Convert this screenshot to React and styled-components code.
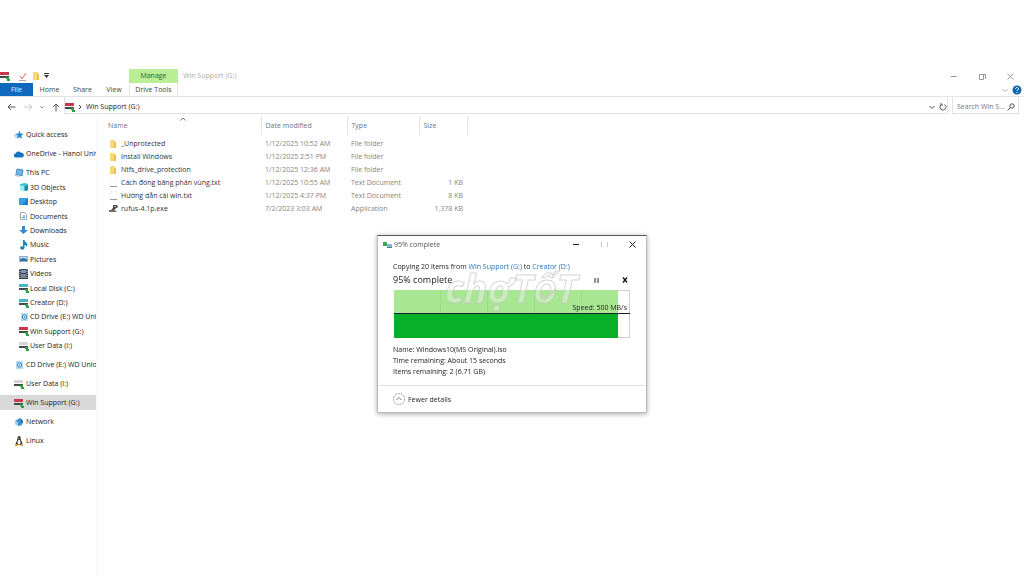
import { useState } from "react";
import styled, { createGlobalStyle } from 'styled-components'

const GlobalStyle = createGlobalStyle`
    * {
        box-sizing: border-box;
    }

    body {
        margin: 0;
        background-color: #fff;
        color: #222;
        font-family: "Open Sans", "Noto Sans", sans-serif;
        font-size: 7px;
        line-height: 11px;
    }

    button, input {
        font: inherit;
        color: inherit;
        border: none;
        background: none;
        padding: 0;
        margin: 0;
    }

    a {
        color: inherit;
        text-decoration: none;
    }
`;

//Style
const StyledWindow = styled.div`
    min-height: 100vh;
    padding-top: 69px;
    display: flex;
    flex-direction: column;
`;

const StyledTitleBar = styled.header`
    display: flex;
    align-items: stretch;
    height: 14px;
`;

const StyledQuickBar = styled.div`
    display: flex;
    align-items: center;
    width: 129px;
    gap: 3px;
`;

const StyledManage = styled.div`
    width: 49px;
    background-color: #b9ee94;
    color: #3c5a30;
    text-align: center;
    line-height: 14px;
`;

const StyledWindowTitle = styled.div`
    flex: 1;
    padding-left: 5px;
    color: #aaa;
    line-height: 14px;
`;

const StyledCaptionButton = styled.button`
    width: 28px;
    color: ${(props) => props.$color || '#999'};
    display: flex;
    align-items: center;
    justify-content: center;
`;

const StyledRibbon = styled.nav`
    display: flex;
    align-items: stretch;
    height: 14px;
    border-bottom: 1px solid #e4e4e4;
`;

const StyledTab = styled.button`
    width: ${(props) => props.$width}px;
    background-color: ${(props) => (props.$file ? '#0e69bc' : 'transparent')};
    color: ${(props) => (props.$file ? '#e4f0fa' : '#444')};
    border-left: 1px solid ${(props) => (props.$context ? '#e4e4e4' : 'transparent')};
    border-right: 1px solid ${(props) => (props.$context ? '#e4e4e4' : 'transparent')};
    text-align: center;
`;

const StyledRibbonEnd = styled.div`
    margin-left: auto;
    padding-right: 2px;
    display: flex;
    align-items: center;
    gap: 4px;
`;

const StyledAddressRow = styled.div`
    display: flex;
    align-items: stretch;
    height: 17px;
    gap: 4px;
    padding-right: 5px;
`;

const StyledNavButtons = styled.div`
    display: flex;
    align-items: center;
    justify-content: space-between;
    width: 60px;
    padding: 3px 0 0 7px;
`;

const StyledIconButton = styled.button`
    display: flex;
    align-items: center;
    justify-content: center;
    color: ${(props) => props.$color || '#555'};
`;

const StyledAddress = styled.div`
    flex: 1;
    display: flex;
    align-items: center;
    gap: 4px;
    padding-top: 3px;
    border: 1px solid #e2e2e2;
    border-top: none;
`;

const StyledPath = styled.a`
    flex: 1;
`;

const StyledSearch = styled.label`
    width: 67px;
    display: flex;
    align-items: center;
    padding: 3px 3px 0 4px;
    border: 1px solid #e2e2e2;
    border-top: none;
    color: #555;
`;

const StyledSearchInput = styled.input`
    flex: 1;
    min-width: 0;
    outline: none;

    &::placeholder {
        color: #777;
        opacity: 1;
    }
`;

const StyledBody = styled.div`
    flex: 1;
    display: flex;
    align-items: stretch;
`;

const StyledSidebar = styled.nav`
    width: 98px;
    flex: none;
    padding: 13px 1px 0 0;
    border-right: 1px solid #f3f3f3;
    display: flex;
    flex-direction: column;
    gap: 4px;
`;

const StyledItem = styled.a`
    display: flex;
    align-items: center;
    gap: ${(props) => (props.$child ? 1 : 2)}px;
    height: ${(props) => (props.$child ? 'auto' : '15px')};
    padding-left: ${(props) => (props.$child ? 19 : 14)}px;
    background-color: ${(props) => (props.$active ? '#d9d9d9' : 'transparent')};
    white-space: nowrap;
    overflow: hidden;

    svg {
        flex: none;
    }
`;

const StyledChildren = styled.div`
    display: grid;
    grid-auto-rows: 1fr;
    height: 173px;
`;

const StyledMain = styled.main`
    flex: 1;
    min-width: 0;
    padding-top: 2px;
`;

const StyledTable = styled.table`
    table-layout: fixed;
    width: 369px;
    border-collapse: collapse;
    color: #858585;
`;

const StyledHeadCell = styled.th`
    width: ${(props) => props.$width}px;
    height: 19px;
    padding: 0 0 0 ${(props) => props.$indent || 4}px;
    border-right: 1px solid #e5e5e5;
    color: #65758b;
    font-weight: normal;
    text-align: left;
    position: relative;
`;

const StyledSort = styled.span`
    position: absolute;
    top: 0;
    left: 82px;
    display: flex;
`;

const StyledGap = styled.td`
    height: 2px;
    padding: 0;
`;

const StyledCell = styled.td`
    height: 13px;
    padding: 0 4px;
    text-align: ${(props) => (props.$right ? 'right' : 'left')};
    white-space: nowrap;
`;

const StyledFileName = styled.a`
    display: flex;
    align-items: center;
    gap: 3px;
    padding-left: 7px;
    color: #333;
`;

const StyledDialog = styled.section`
    position: fixed;
    top: 235px;
    left: 377px;
    width: 270px;
    background-color: #fff;
    border: 1px solid #bbb;
    border-top-color: #555;
    box-shadow: 0 1px 5px rgba(0, 0, 0, 0.35);
`;

const StyledDialogTitle = styled.header`
    display: flex;
    align-items: center;
    height: 17px;
    padding-left: 5px;
    color: #555;
`;

const StyledDialogName = styled.h1`
    flex: 1;
    margin: 0;
    padding-left: 1px;
    font-size: 7px;
    font-weight: normal;
`;

const StyledDialogBody = styled.div`
    padding: 8px 16px 8px 15px;
`;

const StyledLink = styled.a`
    color: #2a73b8;
`;

const StyledStatus = styled.div`
    display: flex;
    align-items: center;
    height: 18px;
    padding: 0 1px 4px 0;
    font-size: 9px;
    color: #222;
`;

const StyledPercent = styled.div`
    flex: 1;
`;

const StyledActions = styled.div`
    display: flex;
    align-items: center;
    gap: 23px;
    padding-top: 2px;
`;

const StyledChart = styled.div`
    position: relative;
    height: 48px;
    margin: 0 0 6px 1px;
    background-color: #fff;
    box-shadow: inset 0 0 0 1px #d0d0d0;
`;

const StyledProgress = styled.div`
    height: 100%;
    display: flex;
    flex-direction: column;
    background-color: #a8e791;
    background-image: repeating-linear-gradient(to right, transparent 0 46px, #9bdc85 46px 47px);
`;

const StyledSolid = styled.div`
    height: 50%;
    margin-top: auto;
    background-color: #08b028;
`;

const StyledSpeed = styled.div`
    position: absolute;
    left: 0;
    right: 0;
    bottom: 24px;
    padding-right: 3px;
    border-bottom: 1px solid #123;
    text-align: right;
`;

const StyledFooter = styled.footer`
    height: 27px;
    padding-left: 15px;
    border-top: 1px solid #e2e2e2;
    display: flex;
    align-items: center;
`;

const StyledFewer = styled.button`
    display: flex;
    align-items: center;
    gap: 3px;
`;

const StyledWatermark = styled.div`
    position: absolute;
    top: 38px;
    left: 67px;
    display: flex;
    align-items: baseline;
    font-size: 39px;
    font-style: italic;
    font-weight: bold;
    line-height: 28px;
    color: rgba(255, 255, 255, 0.35);
    -webkit-text-stroke: 1px rgba(195, 195, 195, 0.7);
    pointer-events: none;
`;

const StyledSmallCap = styled.span`
    position: relative;
    font-size: 32px;
`;

const StyledCheck = styled.svg`
    position: absolute;
    left: 4px;
    top: 8px;
`;

function Drive({ color }){
    return(
        <svg width="10" height="10" viewBox="0 0 10 10" aria-hidden="true">
            <rect x="0" y="1" width="9" height="3" fill={color} />
            <rect x="0" y="5" width="9" height="2" fill="#3f4f46" />
            <path d="M6 6h3v2h1v2H7V8H6z" fill="#2f9e44" />
        </svg>
    )
}

function SideIcon({ name }){
    switch (name){
        case "red": return <Drive color="#c9374a" />
        case "teal": return <Drive color="#48b6c4" />
        case "grey": return <Drive color="#d5d5d5" />
        case "star": return <svg width="10" height="10" viewBox="0 0 10 10"><path d="M5.5.8l1.1 2.7 3 .2-2.3 2 .8 3-2.6-1.5L3 8.8l.7-3-2.3-2 3-.3z" fill="#2688cf" /><path d="M0 5h3M1 7h2" stroke="#7bbce8" /></svg>
        case "cloud": return <svg width="10" height="10" viewBox="0 0 10 10"><path d="M2 8.500a2 2 0 0 1-.3-4A3 3 0 0 1 7 3.800a2.400 2.400 0 0 1 1 4.700z" fill="#1673c0" /></svg>
        case "pc": return <svg width="10" height="10" viewBox="0 0 10 10"><path d="M3 1l6 1-1 6-6-2z" fill="#72b5e8" stroke="#4b89bd" /><path d="M1 6l5 2-1 1-4-1z" fill="#b4c6d6" /></svg>
        case "cube": return <svg width="10" height="10" viewBox="0 0 10 10"><path d="M1 2l5-1 3 1v6L6 9 1 8z" fill="#3cc4d8" /><path d="M1 3l4 1v5L1 8z" fill="#a5e8ef" /><path d="M6 4l3-1v5L6 9z" fill="#178ca8" /></svg>
        case "desktop": return <svg width="10" height="10" viewBox="0 0 10 10"><rect y="1" width="9" height="7" fill="#1681ce" /><path d="M0 1h9L3 8H0z" fill="#36a2e6" /></svg>
        case "doc": return <svg width="10" height="10" viewBox="0 0 10 10"><path d="M1.500 1.500h4l2 2v5h-6z" fill="#fff" stroke="#98a6b4" /><path d="M5 4v3M3 6.500h3" stroke="#6b96bf" /></svg>
        case "down": return <svg width="10" height="10" viewBox="0 0 10 10"><path d="M3 1h3v4h3L4.500 9 0 5h3z" fill="#3886cf" /></svg>
        case "music": return <svg width="10" height="10" viewBox="0 0 10 10"><path d="M4 0h1.500c0 2 3 2.500 3 5L7 7c0-1.500-.5-2-1.500-2v3a2.200 1.700 0 1 1-1.500-1.700z" fill="#1987bd" /></svg>
        case "picture": return <svg width="10" height="10" viewBox="0 0 10 10"><rect x=".5" y="2.500" width="8" height="5" fill="#b9dcf3" stroke="#9bb0c0" /><path d="M1 7V5l3-1 4 1v2z" fill="#2f74a8" /></svg>
        case "video": return <svg width="10" height="10" viewBox="0 0 10 10"><rect x="0" y="0" width="9" height="10" fill="#34424e" /><path d="M1 0v10M8 0v10" stroke="#c8d0d6" strokeDasharray="1 1" /><rect x="2" y="1" width="5" height="3" fill="#8094b8" /><rect x="2" y="5" width="5" height="4" fill="#7b849a" /></svg>
        case "disc": return <svg width="10" height="10" viewBox="0 0 10 10"><rect x="2" y="1" width="7" height="8" fill="#b5dcf1" /><circle cx="5.500" cy="5" r="2.200" fill="#e2f3fb" stroke="#3a87b6" /><circle cx="5.500" cy="5" r=".7" fill="#26648f" /></svg>
        case "network": return <svg width="10" height="10" viewBox="0 0 10 10"><path d="M1 4l5-3 3 3-1 4-3 1-4-2z" fill="#3f93d4" /><path d="M1 4l3 1v4L1 7z" fill="#a8cdea" /><path d="M6 1l3 3-1 3z" fill="#1d66a6" /></svg>
        default: return <svg width="10" height="10" viewBox="0 0 10 10"><path d="M5 0c2 0 1.500 2.500 2 4s2 3 1 5H2C1 7 3 5.500 3.200 4S3.500 0 5 0z" fill="#333" /><ellipse cx="5" cy="6.200" rx="1.500" ry="2.500" fill="#fff" /><path d="M1 8h2l1 2H1zM7 8h2v2H6z" fill="#d9a72c" /><path d="M4 2h2L5 3z" fill="#e8b93c" /></svg>
    }
}

function FileIcon({ kind }){
    if (kind === "folder"){
        return <svg width="9" height="10" viewBox="0 0 9 10"><path d="M1 1h5v8H1z" fill="#f8d978" /><path d="M5 3h2v6H5z" fill="#edbd4d" /></svg>
    }
    if (kind === "text"){
        return <svg width="9" height="10" viewBox="0 0 9 10"><path d="M1.500.5h6v8h-6z" fill="#fff" stroke="#f6f6f6" /><path d="M1 8.500h7" stroke="#999" /></svg>
    }
    return <svg width="9" height="10" viewBox="0 0 9 10"><path d="M4 1h4l1 2-3 2-2 2H1l3-3z" fill="#444" /><path d="M0 6h6l2 2H0z" fill="#6b7466" /><path d="M5 2l2 1" stroke="#ddd" /></svg>
}

function Chevron({ up, size = 6, color = "currentColor" }){
    return(
        <svg width={size} height={size} viewBox="0 0 6 6" fill="none" stroke={color}>
            <path d={up ? "M.5 4.500L3 2l2.500 2.500" : "M.5 2L3 4.500 5.500 2"} />
        </svg>
    )
}

const places = [
    { label: "Quick access", icon: "star" },
    { label: "OneDrive - Hanoi Univ", icon: "cloud" },
    {
        label: "This PC",
        icon: "pc",
        children: [
            { label: "3D Objects", icon: "cube" },
            { label: "Desktop", icon: "desktop" },
            { label: "Documents", icon: "doc" },
            { label: "Downloads", icon: "down" },
            { label: "Music", icon: "music" },
            { label: "Pictures", icon: "picture" },
            { label: "Videos", icon: "video" },
            { label: "Local Disk (C:)", icon: "teal" },
            { label: "Creator (D:)", icon: "teal" },
            { label: "CD Drive (E:) WD Unl", icon: "disc" },
            { label: "Win Support (G:)", icon: "red" },
            { label: "User Data (I:)", icon: "grey" },
        ],
    },
    { label: "CD Drive (E:) WD Unlo", icon: "disc" },
    { label: "User Data (I:)", icon: "grey" },
    { label: "Win Support (G:)", icon: "red", active: true },
    { label: "Network", icon: "network" },
    { label: "Linux", icon: "linux" },
];

const files = [
    { name: "_Unprotected", date: "1/12/2025 10:52 AM", type: "File folder", size: "", kind: "folder" },
    { name: "Install Windows", date: "1/12/2025 2:51 PM", type: "File folder", size: "", kind: "folder" },
    { name: "Ntfs_drive_protection", date: "1/12/2025 12:36 AM", type: "File folder", size: "", kind: "folder" },
    { name: "Cách đóng băng phân vùng.txt", date: "1/12/2025 10:55 AM", type: "Text Document", size: "1 KB", kind: "text" },
    { name: "Hướng dẫn cài win.txt", date: "1/12/2025 4:37 PM", type: "Text Document", size: "8 KB", kind: "text" },
    { name: "rufus-4.1p.exe", date: "7/2/2023 3:03 AM", type: "Application", size: "1,378 KB", kind: "exe" },
];

function Sidebar(){
    return(
        <StyledSidebar aria-label="Places">
            {places.map((place) => (
                <div key={place.label}>
                    <StyledItem href="#" $active={place.active}>
                        <SideIcon name={place.icon} />{place.label}
                    </StyledItem>
                    {place.children && (
                        <StyledChildren>
                            {place.children.map((child) => (
                                <StyledItem href="#" $child key={child.label}>
                                    <SideIcon name={child.icon} />{child.label}
                                </StyledItem>
                            ))}
                        </StyledChildren>
                    )}
                </div>
            ))}
        </StyledSidebar>
    )
}

function FileTable(){
    return(
        <StyledTable>
            <thead>
                <tr>
                    <StyledHeadCell $width={163} $indent={10}>
                        Name
                        <StyledSort><Chevron up color="#777" /></StyledSort>
                    </StyledHeadCell>
                    <StyledHeadCell $width={86}>Date modified</StyledHeadCell>
                    <StyledHeadCell $width={72}>Type</StyledHeadCell>
                    <StyledHeadCell $width={48}>Size</StyledHeadCell>
                </tr>
            </thead>
            <tbody>
                <tr><StyledGap colSpan="4" /></tr>
                {files.map((file) => (
                    <tr key={file.name}>
                        <StyledCell>
                            <StyledFileName href="#"><FileIcon kind={file.kind} />{file.name}</StyledFileName>
                        </StyledCell>
                        <StyledCell>{file.date}</StyledCell>
                        <StyledCell>{file.type}</StyledCell>
                        <StyledCell $right>{file.size}</StyledCell>
                    </tr>
                ))}
            </tbody>
        </StyledTable>
    )
}

function CopyDialog({ progress }){
    return(
        <StyledDialog role="dialog" aria-label="Copy progress">
            <StyledDialogTitle>
                <svg width="10" height="8" viewBox="0 0 10 8"><path d="M0 1h4v4H0z" fill="#35a852" /><path d="M4 3h5v4H4z" fill="#7fb6d6" /><path d="M4 6h5v1H4z" fill="#48836f" /></svg>
                <StyledDialogName>{progress}% complete</StyledDialogName>
                <StyledCaptionButton aria-label="Minimize" $color="#222"><svg width="7" height="7"><path d="M0 3.500h6" stroke="currentColor" /></svg></StyledCaptionButton>
                <StyledCaptionButton aria-label="Maximize" $color="#ccc"><svg width="7" height="7"><path d="M.5 1v5M6.500 1v5" stroke="currentColor" /></svg></StyledCaptionButton>
                <StyledCaptionButton aria-label="Close" $color="#222"><svg width="7" height="7"><path d="M.5.5l6 6M6.500.5l-6 6" stroke="currentColor" /></svg></StyledCaptionButton>
            </StyledDialogTitle>
            <StyledDialogBody>
                <div>
                    Copying 20 items from <StyledLink href="#">Win Support (G:)</StyledLink> to <StyledLink href="#">Creator (D:)</StyledLink>
                </div>
                <StyledStatus>
                    <StyledPercent>{progress}% complete</StyledPercent>
                    <StyledActions>
                        <StyledIconButton aria-label="Pause" $color="#222"><svg width="5" height="5"><path d="M1 0v5M4 0v5" stroke="currentColor" /></svg></StyledIconButton>
                        <StyledIconButton aria-label="Cancel" $color="#111"><svg width="7" height="6"><path d="M1 .5l4 5M5 .5l-4 5" stroke="currentColor" strokeWidth="1.300" /></svg></StyledIconButton>
                    </StyledActions>
                </StyledStatus>
                <StyledChart>
                    <StyledProgress style={{ width: `${progress}%` }}><StyledSolid /></StyledProgress>
                    <StyledSpeed>Speed: 500 MB/s</StyledSpeed>
                </StyledChart>
                <div>Name: Windows10(MS Original).iso</div>
                <div>Time remaining: About 15 seconds</div>
                <div>Items remaining: 2 (6.71 GB)</div>
            </StyledDialogBody>
            <StyledFooter>
                <StyledFewer>
                    <svg width="12" height="12" viewBox="0 0 12 12" fill="none"><circle cx="6" cy="6" r="5.500" stroke="#999" strokeDasharray="2 1" /><path d="M3.500 7L6 4.500 8.500 7" stroke="#777" /></svg>
                    Fewer details
                </StyledFewer>
            </StyledFooter>
            <StyledWatermark aria-hidden="true">
                chợT
                <StyledSmallCap>
                    Ố
                    <StyledCheck width="22" height="18" viewBox="0 0 22 18" fill="none"><path d="M4 9l4 5L19 4" stroke="#c9cfc6" strokeWidth="2" /></StyledCheck>
                </StyledSmallCap>
                T
            </StyledWatermark>
        </StyledDialog>
    )
}

function App(){
    const [search, setSearch] = useState('');

    return(
        <>
            <GlobalStyle />
            <StyledWindow>
                <StyledTitleBar>
                    <StyledQuickBar>
                        <Drive color="#c9374a" />
                        <svg width="16" height="10" viewBox="0 0 16 10" fill="none"><path d="M7 5l2 3 4-6" stroke="#e0704e" /><path d="M6 9.500h7" stroke="#aaa" /></svg>
                        <FileIcon kind="folder" />
                        <svg width="5" height="6" fill="none"><path d="M0 .5h5" stroke="#333" /><path d="M0 2h5L2.500 5z" fill="#333" /></svg>
                    </StyledQuickBar>
                    <StyledManage>Manage</StyledManage>
                    <StyledWindowTitle>Win Support (G:)</StyledWindowTitle>
                    <StyledCaptionButton aria-label="Minimize"><svg width="7" height="7"><path d="M0 3.500h6" stroke="currentColor" /></svg></StyledCaptionButton>
                    <StyledCaptionButton aria-label="Restore"><svg width="7" height="7" fill="none"><path d="M.5 1.500h4v5h-4zM2 1.500h4.500V6" stroke="currentColor" /></svg></StyledCaptionButton>
                    <StyledCaptionButton aria-label="Close"><svg width="7" height="7"><path d="M.5.5l6 6M6.500.5l-6 6" stroke="currentColor" /></svg></StyledCaptionButton>
                </StyledTitleBar>
                <StyledRibbon>
                    <StyledTab $width={33} $file>File</StyledTab>
                    <StyledTab $width={33}>Home</StyledTab>
                    <StyledTab $width={33}>Share</StyledTab>
                    <StyledTab $width={30}>View</StyledTab>
                    <StyledTab $width={49} $context>Drive Tools</StyledTab>
                    <StyledRibbonEnd>
                        <StyledIconButton aria-label="Expand the ribbon" $color="#aaa"><Chevron /></StyledIconButton>
                        <StyledIconButton aria-label="Help"><svg width="10" height="10" viewBox="0 0 10 10" fill="none"><circle cx="5" cy="5" r="4.500" fill="#0f66ad" /><path d="M3.500 4c0-2 3-2 3 0 0 1-1.500 1-1.500 2M5 7v1" stroke="#fff" /></svg></StyledIconButton>
                    </StyledRibbonEnd>
                </StyledRibbon>
                <StyledAddressRow>
                    <StyledNavButtons>
                        <StyledIconButton aria-label="Back"><svg width="9" height="8" fill="none"><path d="M8.500 4H1M4 1L1 4l3 3" stroke="currentColor" /></svg></StyledIconButton>
                        <StyledIconButton aria-label="Forward" $color="#ccc"><svg width="9" height="8" fill="none"><path d="M0 4h7.500M5 1l3 3-3 3" stroke="currentColor" /></svg></StyledIconButton>
                        <StyledIconButton aria-label="Recent locations"><Chevron size={4} /></StyledIconButton>
                        <StyledIconButton aria-label="Up"><svg width="8" height="9" fill="none"><path d="M4 8.500V1M1 4l3-3 3 3" stroke="currentColor" /></svg></StyledIconButton>
                    </StyledNavButtons>
                    <StyledAddress>
                        <Drive color="#c9374a" />
                        <svg width="3" height="6" fill="none"><path d="M0 1l2 2-2 2" stroke="#444" /></svg>
                        <StyledPath href="#">Win Support (G:)</StyledPath>
                        <StyledIconButton aria-label="Previous locations"><Chevron /></StyledIconButton>
                        <StyledIconButton aria-label="Refresh"><svg width="8" height="8" viewBox="0 0 8 8" fill="none"><path d="M5.500 1.500A3 3 0 1 1 2 1.800M1 1h2v2" stroke="currentColor" /></svg></StyledIconButton>
                    </StyledAddress>
                    <StyledSearch>
                        <StyledSearchInput
                        type="text"
                        aria-label="Search"
                        placeholder="Search Win S..."
                        value={search}
                        onChange={(e) => setSearch(e.target.value)} />
                        <svg width="8" height="8" viewBox="0 0 8 8" fill="none"><circle cx="5" cy="3" r="2.200" stroke="currentColor" /><path d="M3.500 4.500L.5 7.500" stroke="currentColor" /></svg>
                    </StyledSearch>
                </StyledAddressRow>
                <StyledBody>
                    <Sidebar />
                    <StyledMain>
                        <FileTable />
                    </StyledMain>
                </StyledBody>
            </StyledWindow>
            <CopyDialog progress={95} />
        </>
    )
}

export default App
